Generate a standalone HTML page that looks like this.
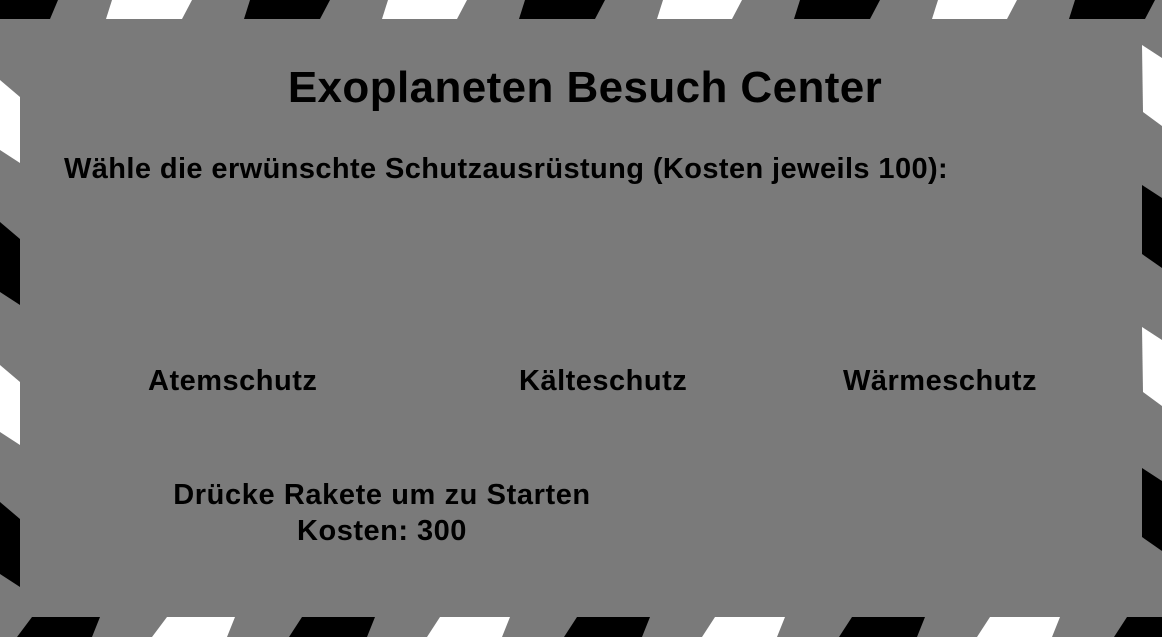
<!DOCTYPE html>
<html><head><meta charset="utf-8"><style>
html,body{margin:0;padding:0;}
body{width:1162px;height:637px;background:#7a7a7a;position:relative;overflow:hidden;font-family:"Liberation Sans",Arial,sans-serif;font-weight:bold;color:#000;}
svg{position:absolute;left:0;top:0;}
.t{position:absolute;white-space:nowrap;line-height:1;}
</style></head><body>
<svg width="1162" height="637" viewBox="0 0 1162 637">
<polygon points="0,0 58,0 50,19 0,19" fill="#000"/>
<polygon points="112,0 192,0 182,19 106,19" fill="#fff"/>
<polygon points="250,0 330,0 320,19 244,19" fill="#000"/>
<polygon points="388,0 467,0 457,19 382,19" fill="#fff"/>
<polygon points="525,0 605,0 595,19 519,19" fill="#000"/>
<polygon points="663,0 742,0 732,19 657,19" fill="#fff"/>
<polygon points="800,0 880,0 870,19 794,19" fill="#000"/>
<polygon points="938,0 1017,0 1007,19 932,19" fill="#fff"/>
<polygon points="1075,0 1155,0 1145,19 1069,19" fill="#000"/>
<polygon points="32,617 100,617 92,637 17,637" fill="#000"/>
<polygon points="167,617 235,617 227,637 152,637" fill="#fff"/>
<polygon points="302,617 375,617 367,637 289,637" fill="#000"/>
<polygon points="440,617 510,617 502,637 427,637" fill="#fff"/>
<polygon points="577,617 650,617 642,637 564,637" fill="#000"/>
<polygon points="715,617 785,617 777,637 702,637" fill="#fff"/>
<polygon points="852,617 925,617 917,637 839,637" fill="#000"/>
<polygon points="990,617 1060,617 1052,637 977,637" fill="#fff"/>
<polygon points="1127,617 1162,617 1162,637 1114,637" fill="#000"/>
<polygon points="0,80 20,97 20,163 0,150" fill="#fff"/>
<polygon points="0,222 20,239 20,305 0,292" fill="#000"/>
<polygon points="0,365 20,382 20,445 0,432" fill="#fff"/>
<polygon points="0,502 20,519 20,587 0,574" fill="#000"/>
<polygon points="1142,45 1162,58 1162,126 1143,112" fill="#fff"/>
<polygon points="1142,185 1162,198 1162,268 1142,254" fill="#000"/>
<polygon points="1142,327 1162,340 1162,406 1143,392" fill="#fff"/>
<polygon points="1142,468 1162,481 1162,551 1142,537" fill="#000"/>
</svg>
<div class="t" style="left:0;width:1170px;text-align:center;top:66px;font-size:44px;letter-spacing:0.4px;">Exoplaneten Besuch Center</div>
<div class="t" style="left:64px;top:155px;font-size:29px;letter-spacing:0.4px;">Wähle die erwünschte Schutzausrüstung (Kosten jeweils 100):</div>
<div class="t" style="left:148px;top:367px;font-size:29px;letter-spacing:0.5px;">Atemschutz</div>
<div class="t" style="left:519px;top:367px;font-size:29px;letter-spacing:0.5px;">Kälteschutz</div>
<div class="t" style="left:843px;top:367px;font-size:29px;letter-spacing:0.5px;">Wärmeschutz</div>
<div class="t" style="left:82px;width:600px;text-align:center;top:481px;font-size:29px;letter-spacing:0.6px;">Drücke Rakete um zu Starten</div>
<div class="t" style="left:82px;width:600px;text-align:center;top:517px;font-size:29px;letter-spacing:0.5px;">Kosten: 300</div>
</body></html>
